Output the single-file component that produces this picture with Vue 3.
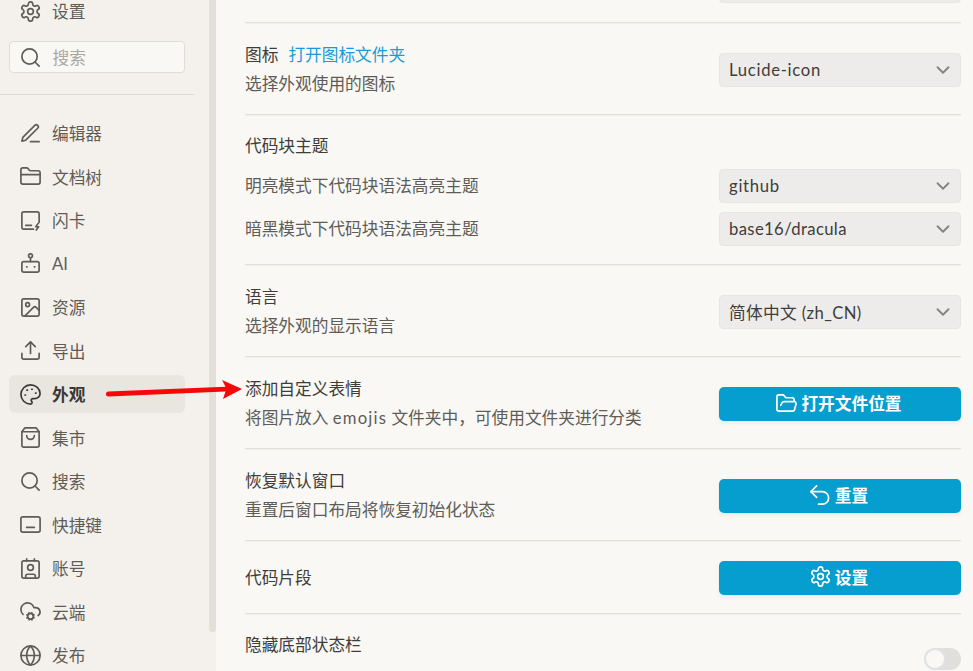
<script setup>
const icons = {
  settings: ['M12.22 2h-.44a2 2 0 0 0-2 2v.18a2 2 0 0 1-1 1.73l-.43.25a2 2 0 0 1-2 0l-.15-.08a2 2 0 0 0-2.73.73l-.22.38a2 2 0 0 0 .73 2.73l.15.1a2 2 0 0 1 1 1.72v.51a2 2 0 0 1-1 1.74l-.15.09a2 2 0 0 0-.73 2.73l.22.38a2 2 0 0 0 2.73.73l.15-.08a2 2 0 0 1 2 0l.43.25a2 2 0 0 1 1 1.73V20a2 2 0 0 0 2 2h.44a2 2 0 0 0 2-2v-.18a2 2 0 0 1 1-1.73l.43-.25a2 2 0 0 1 2 0l.15.08a2 2 0 0 0 2.73-.73l.22-.39a2 2 0 0 0-.73-2.73l-.15-.08a2 2 0 0 1-1-1.74v-.5a2 2 0 0 1 1-1.74l.15-.09a2 2 0 0 0 .73-2.73l-.22-.38a2 2 0 0 0-2.73-.73l-.15.08a2 2 0 0 1-2 0l-.43-.25a2 2 0 0 1-1-1.73V4a2 2 0 0 0-2-2z', 'M15 12a3 3 0 1 1-6 0 3 3 0 0 1 6 0z'],
  search: ['M19 11a8 8 0 1 1-16 0 8 8 0 0 1 16 0z', 'm21 21-4.3-4.3'],
  pen: ['M12 20.5h9', 'M16.5 3.5a2.12 2.12 0 0 1 3 3L7 19l-4 1 1-4Z'],
  folder: ['M20 20a2 2 0 0 0 2-2V8a2 2 0 0 0-2-2h-7.9a2 2 0 0 1-1.69-.9L9.6 3.9A2 2 0 0 0 7.93 3H4a2 2 0 0 0-2 2v13a2 2 0 0 0 2 2Z', 'M2 10h20'],
  card: ['M21 14V5a2 2 0 0 0-2-2H5a2 2 0 0 0-2 2v14a2 2 0 0 0 2 2h10', 'M7 17h6', 'M20 15l-2.5 3.5h3L18 22'],
  bot: ['M14 4a2 2 0 1 1-4 0 2 2 0 0 1 4 0z', 'M12 6v4', 'M5 10h14a2 2 0 0 1 2 2v7a2 2 0 0 1-2 2H5a2 2 0 0 1-2-2v-7a2 2 0 0 1 2-2z', 'M8 15.5h.4', 'M16 15.5h.4'],
  image: ['M5 3h14a2 2 0 0 1 2 2v14a2 2 0 0 1-2 2H5a2 2 0 0 1-2-2V5a2 2 0 0 1 2-2z', 'M11 9a2 2 0 1 1-4 0 2 2 0 0 1 4 0z', 'm21 15-3.086-3.086a2 2 0 0 0-2.828 0L6 21'],
  upload: ['M21 15v4a2 2 0 0 1-2 2H5a2 2 0 0 1-2-2v-4', 'M17 8l-5-5-5 5', 'M12 3v12'],
  palette: ['M12 2C6.5 2 2 6.5 2 12s4.5 10 10 10c.926 0 1.648-.746 1.648-1.688 0-.437-.18-.835-.437-1.125-.29-.289-.438-.652-.438-1.125a1.64 1.64 0 0 1 1.668-1.668h1.996c3.051 0 5.555-2.503 5.555-5.554C21.965 6.012 17.461 2 12 2z', 'M13.3 6.5h.5', 'M17.3 10.5h.5', 'M8.3 7.5h.5', 'M6.3 12.5h.5'],
  bag: ['M6 2 3 6v14a2 2 0 0 0 2 2h14a2 2 0 0 0 2-2V6l-3-4Z', 'M3 6h18', 'M16 10a4 4 0 0 1-8 0'],
  keyboard: ['M4 4h16a2 2 0 0 1 2 2v12a2 2 0 0 1-2 2H4a2 2 0 0 1-2-2V6a2 2 0 0 1 2-2z', 'M8 15h8'],
  contact: ['M16 2v2', 'M7 22v-2a2 2 0 0 1 2-2h6a2 2 0 0 1 2 2v2', 'M8 2v2', 'M15 11a3 3 0 1 1-6 0 3 3 0 0 1 6 0z', 'M5 4h14a2 2 0 0 1 2 2v14a2 2 0 0 1-2 2H5a2 2 0 0 1-2-2V6a2 2 0 0 1 2-2z'],
  cloud: ['M4.2 15.1A7 7 0 1 1 15.71 8h1.79a4.5 4.5 0 0 1 2.5 8.2', 'M15 17a3 3 0 1 1-6 0 3 3 0 0 1 6 0z', 'm15.7 18.4-.9-.3', 'm9.2 15.9-.9-.3', 'm10.6 20.7.3-.9', 'm13.1 14.2.3-.9', 'm13.6 20.7-.4-1', 'm10.8 14.3-.4-1', 'm8.3 18.6 1-.4', 'm14.7 15.8 1-.4'],
  globe: ['M22 12a10 10 0 1 1-20 0 10 10 0 0 1 20 0z', 'M12 2a14.5 14.5 0 0 0 0 20 14.5 14.5 0 0 0 0-20', 'M2 12h20'],
  open: ['m6 14 1.5-2.9A2 2 0 0 1 9.24 10H20a2 2 0 0 1 1.94 2.5l-1.54 6a2 2 0 0 1-1.95 1.5H4a2 2 0 0 1-2-2V5a2 2 0 0 1 2-2h3.9a2 2 0 0 1 1.69.9l.81 1.2a2 2 0 0 0 1.67.9H18a2 2 0 0 1 2 2v2'],
  undo: ['M8 14 2 8l6-6', 'M2 8h12a6.5 6.5 0 0 1 0 13H10'],
  chevron: ['m6 9 6 6 6-6'],
}
const nav = [
  ['pen', '编辑器'], ['folder', '文档树'], ['card', '闪卡'], ['bot', 'AI'], ['image', '资源'], ['upload', '导出'],
  ['palette', '外观', true], ['bag', '集市'], ['search', '搜索'], ['keyboard', '快捷键'], ['contact', '账号'], ['cloud', '云端'], ['globe', '发布'],
]
const actions = [
  { title: '添加自定义表情', desc: ['将图片放入', 'emojis', '文件夹中，可使用文件夹进行分类'], icon: 'open', label: '打开文件位置' },
  { title: '恢复默认窗口', desc: ['重置后窗口布局将恢复初始化状态'], icon: 'undo', label: '重置' },
  { title: '代码片段', icon: 'settings', label: '设置' },
]
</script>

<template>
  <div class="page">
    <aside class="side">
      <div class="scrollbar"></div>
      <div class="nav-item first">
        <svg class="ico" viewBox="0 0 24 24"><path v-for="d in icons.settings" :key="d" :d="d" /></svg>
        <span>设置</span>
      </div>
      <div class="search">
        <svg class="ico" viewBox="0 0 24 24"><path v-for="d in icons.search" :key="d" :d="d" /></svg>
        <span>搜索</span>
      </div>
      <div class="side-line"></div>
      <nav class="nav">
        <div v-for="n in nav" :key="n[1]" class="nav-item" :class="{ active: n[2] }">
          <svg class="ico" viewBox="0 0 24 24"><path v-for="d in icons[n[0]]" :key="d" :d="d" /></svg>
          <span>{{ n[1] }}</span>
        </div>
      </nav>
    </aside>

    <main class="main">
      <section class="row stub">
        <div class="select"></div>
      </section>

      <section class="row">
        <div class="text">
          <div class="title">图标<a class="link">打开图标文件夹</a></div>
          <div class="desc">选择外观使用的图标</div>
        </div>
        <div class="select"><span>Lucide-icon</span>
          <svg class="chev" viewBox="0 0 24 24"><path :d="icons.chevron[0]" /></svg>
        </div>
      </section>

      <section class="row code">
        <div class="title">代码块主题</div>
        <div class="sub">
          <div class="desc">明亮模式下代码块语法高亮主题</div>
          <div class="select"><span>github</span>
            <svg class="chev" viewBox="0 0 24 24"><path :d="icons.chevron[0]" /></svg>
          </div>
        </div>
        <div class="sub">
          <div class="desc">暗黑模式下代码块语法高亮主题</div>
          <div class="select tight"><span>base16/dracula</span>
            <svg class="chev" viewBox="0 0 24 24"><path :d="icons.chevron[0]" /></svg>
          </div>
        </div>
      </section>

      <section class="row">
        <div class="text">
          <div class="title">语言</div>
          <div class="desc">选择外观的显示语言</div>
        </div>
        <div class="select tight"><span>简体中文 (zh_CN)</span>
          <svg class="chev" viewBox="0 0 24 24"><path :d="icons.chevron[0]" /></svg>
        </div>
      </section>

      <section v-for="a in actions" :key="a.title" class="row" :class="{ single: !a.desc }">
        <div class="text">
          <div class="title">{{ a.title }}</div>
          <div v-if="a.desc" class="desc">
            <template v-if="a.desc.length > 1">{{ a.desc[0] }} <span class="latin">{{ a.desc[1] }}</span> {{ a.desc[2] }}</template>
            <template v-else>{{ a.desc[0] }}</template>
          </div>
        </div>
        <button class="btn">
          <svg class="ico" viewBox="0 0 24 24"><path v-for="d in icons[a.icon]" :key="d" :d="d" /></svg>
          <span>{{ a.label }}</span>
        </button>
      </section>

      <section class="row last">
        <div class="title">隐藏底部状态栏</div>
        <div class="toggle"><i></i></div>
      </section>
    </main>

    <svg class="arrow" width="973" height="671" viewBox="0 0 973 671">
      <path d="M108.5 391.6 L225.5 386.8 L222 380 L242 389 L223 399 L225.5 391.4 L108.5 396.6 A2.5 2.5 0 0 1 108.5 391.6 Z" />
    </svg>
  </div>
</template>

<style>
html, body { margin: 0; overflow: hidden; }
</style>

<style scoped>
.page {
  position: relative;
  display: flex;
  width: 973px;
  height: 671px;
  overflow: hidden;
  background: #f9f8f5;
  font-family: "Lato", "Noto Sans CJK SC", sans-serif;
  font-size: 16.7px;
  color: #3f3d3a;
}
.side {
  position: relative;
  flex: none;
  width: 216px;
  background: #f4f1ec;
  display: flex;
  flex-direction: column;
}
.scrollbar {
  position: absolute;
  top: 0;
  right: 0;
  width: 7px;
  height: 632px;
  background: #e3e0d9;
  border-radius: 0 0 3px 3px;
}
.nav-item {
  box-sizing: border-box;
  flex: none;
  width: 176px;
  height: 38px;
  margin-left: 9px;
  padding-left: 9.5px;
  display: flex;
  align-items: center;
  gap: 10.5px;
  border-radius: 6px;
  color: #5f5c57;
}
.nav-item.first { margin-top: -8px; }
.nav-item.active {
  background: #e9e6e0;
  color: #3a3835;
  font-weight: 700;
}
.nav-item.active .ico { stroke: #3a3835; }
.ico {
  flex: none;
  width: 23px;
  height: 23px;
  fill: none;
  stroke: #5f5c57;
  stroke-width: 1.75;
  stroke-linecap: round;
  stroke-linejoin: round;
}
.search {
  box-sizing: border-box;
  flex: none;
  width: 176px;
  height: 32px;
  margin: 11px 0 0 9px;
  padding-left: 9px;
  display: flex;
  align-items: center;
  gap: 10.5px;
  border: 1px solid #e0ddd7;
  border-radius: 4px;
  background: #f9f8f5;
  color: #aaa8a3;
}
.side-line {
  flex: none;
  width: 194px;
  height: 1px;
  margin-top: 21px;
  background: #dedbd5;
}
.nav {
  flex: none;
  display: flex;
  flex-direction: column;
  gap: 5.5px;
  margin-top: 19px;
}
.main {
  flex: 1;
  min-width: 0;
  box-sizing: border-box;
  padding: 0 12px 0 29px;
  display: flex;
  flex-direction: column;
}
.row {
  box-sizing: border-box;
  flex: none;
  height: 92px;
  padding-top: 1px;
  display: flex;
  align-items: center;
  justify-content: space-between;
  border-bottom: 1px solid #e3e0da;
  box-shadow: 0 1px 0 #f2f0ec;
}
.row.stub {
  height: 23px;
  padding-top: 0;
  align-items: flex-end;
  justify-content: flex-end;
  padding-bottom: 19px;
}
.row.code {
  height: 150px;
  flex-direction: column;
  align-items: stretch;
  justify-content: flex-start;
  padding-top: 19px;
  gap: 9px;
}
.row.code .title { margin-bottom: 2px; }
.row.single { height: 73px; }
.row.last {
  height: 60px;
  align-items: flex-start;
  padding-top: 19px;
  border-bottom: 0;
  box-shadow: none;
}
.sub {
  display: flex;
  align-items: center;
  justify-content: space-between;
}
.title, .desc { line-height: 24px; }
.title { color: #3f3d3a; }
.desc { margin-top: 5px; color: #5f5c57; }
.sub .desc { margin-top: 0; }
.latin { letter-spacing: 1.2px; }
.link { margin-left: 10px; color: #1a9bd6; }
.select {
  box-sizing: border-box;
  flex: none;
  position: relative;
  width: 242px;
  height: 34px;
  margin-top: 2px;
  padding: 0 9px;
  display: flex;
  align-items: center;
  border: 1px solid #e8e6e2;
  border-radius: 4px;
  background: #edecea;
  color: #3f3d3a;
  letter-spacing: 0.7px;
}
.select.tight { letter-spacing: 0.35px; }
.sub .select { margin-top: 0; }
.chev {
  position: absolute;
  right: 6px;
  top: 50%;
  width: 22px;
  height: 22px;
  margin-top: -11px;
  fill: none;
  stroke: #858380;
  stroke-width: 2;
  stroke-linecap: round;
  stroke-linejoin: round;
}
.btn {
  flex: none;
  width: 242px;
  height: 34px;
  margin-top: 2px;
  padding: 0 3px 2px 0;
  border: 0;
  border-radius: 5px;
  background: #069dcf;
  color: #fff;
  font: inherit;
  font-weight: 700;
  display: flex;
  align-items: center;
  justify-content: center;
  gap: 3px;
  box-shadow: 0 2px 4px rgba(0, 0, 0, 0.06);
}
.row.single .btn { margin-top: 0; }
.btn .ico { stroke: #fff; stroke-width: 1.75; }
.toggle {
  position: relative;
  flex: none;
  width: 37px;
  height: 22px;
  margin-top: 15px;
  border-radius: 11px;
  background: #e0dfdb;
  overflow: hidden;
}
.toggle i {
  position: absolute;
  left: 2px;
  top: 2px;
  width: 18px;
  height: 18px;
  border-radius: 50%;
  background: #f9f8f5;
  box-shadow: 0 0 0 2px #dfe3e4;
}
.arrow {
  position: absolute;
  left: 0;
  top: 0;
  pointer-events: none;
}
.arrow path { fill: #f60808; }
</style>
